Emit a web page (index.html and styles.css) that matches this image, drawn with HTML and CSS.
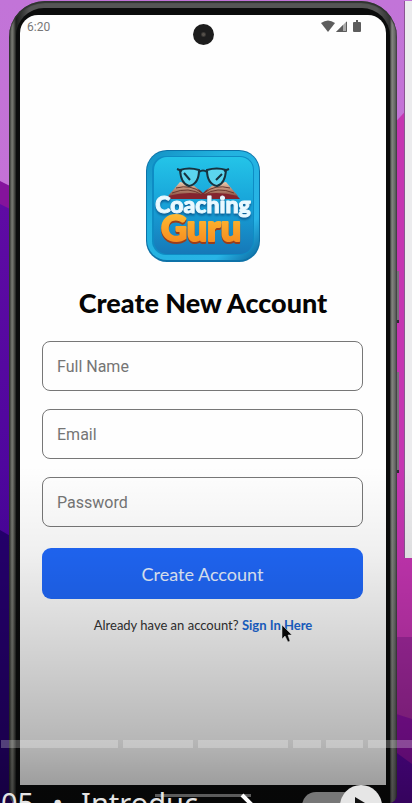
FILE: index.html
```html
<!DOCTYPE html>
<html lang="en">
<head>
<meta charset="utf-8">
<meta name="viewport" content="width=device-width, initial-scale=1">
<title>Create New Account</title>
<link rel="stylesheet" href="styles.css">
</head>
<body>
<svg class="wallpaper" viewBox="0 0 412 803" preserveAspectRatio="none" aria-hidden="true">
  <defs>
    <linearGradient id="violet" x1="0" y1="0" x2="0" y2="1"><stop offset="0" stop-color="#5f0ba4"/><stop offset="1" stop-color="#3a0096"/></linearGradient>
    <linearGradient id="orchid" x1="0" y1="0" x2="0" y2="1"><stop offset="0" stop-color="#c274d8"/><stop offset="1" stop-color="#cb69d0"/></linearGradient>
  </defs>
  <rect width="412" height="803" fill="url(#orchid)"/>
  <path d="M0 181L12 187V220H0Z" fill="#85139c"/>
  <path d="M0 204L12 210V803H0Z" fill="url(#violet)"/>
  <path d="M0 530L12 537V803H0Z" fill="#25006e"/>
  <path d="M390 128L412 104V803H390Z" fill="#c535b2"/>
  <path d="M390 637H412V803H390Z" fill="#a428a0"/>
  <path d="M390 712L412 719V803H390Z" fill="#8a10a4"/>
  <path d="M390 748L412 764V803H390Z" fill="#5b05a0"/>
</svg>
<div class="side-window"></div>

<div class="phone">
  <span class="side-key side-key-power"></span>
  <span class="side-key side-key-volume"></span>
  <div class="bezel">
    <main class="screen">
      <header class="status">
        <time>6:20</time>
        <span class="camera"></span>
        <svg width="42" height="13" viewBox="0 0 42 13" fill="#5d5d5d" aria-hidden="true">
          <path d="M0 3Q7-2 14 3L7 12Z"/>
          <path d="M26 1V12H15Z" fill="#aaa"/><path d="M22 5V12H15Z"/><path d="M25.500 2V11.500H16" fill="none" stroke="#5d5d5d"/>
          <path d="M33 2H35V0H37V2H39Q40 2 40 3V11Q40 12 39 12H33Q32 12 32 11V3Q32 2 33 2Z"/>
        </svg>
      </header>

      <svg class="logo" width="114" height="112" viewBox="0 0 114 112" role="img" aria-label="Coaching Guru">
        <defs>
          <linearGradient id="rim" x1="0" y1="0" x2="1" y2="1"><stop offset="0" stop-color="#1391c4"/><stop offset=".35" stop-color="#22b2df"/><stop offset=".8" stop-color="#28b4e6"/><stop offset="1" stop-color="#0b669e"/></linearGradient>
          <linearGradient id="face" x1="0" y1="0" x2="0" y2="1"><stop offset="0" stop-color="#24c4e8"/><stop offset=".5" stop-color="#17a2d8"/><stop offset="1" stop-color="#1678b8"/></linearGradient>
          <linearGradient id="gold" x1="0" y1="0" x2="0" y2="1"><stop offset="0" stop-color="#ffc838"/><stop offset="1" stop-color="#f5831c"/></linearGradient>
          <linearGradient id="page" x1="0" y1="0" x2="0" y2="1"><stop offset="0" stop-color="#edc9ac"/><stop offset="1" stop-color="#8d5142"/></linearGradient>
        </defs>
        <rect width="114" height="112" rx="21" fill="#0d72a8"/>
        <rect x="1" y="1" width="112" height="109" rx="20" fill="url(#rim)"/>
        <rect x="6" y="6" width="102" height="99" rx="14" fill="#0e8cc4"/>
        <rect x="8" y="7" width="99" height="97" rx="13" fill="url(#face)"/>
        <path d="M20 49L33 35Q49 34 57 43Q65 34 81 35L94 49Z" fill="#84242e"/>
        <path d="M22 46L34 32Q49 33 56 44Q40 41 22 46Z" fill="url(#page)"/>
        <path d="M92 46L80 32Q65 33 58 44Q74 41 92 46Z" fill="url(#page)"/>
        <path d="M26 43Q43 36 56 45M30 38Q45 34 56 43M88 43Q71 36 58 45M84 38Q69 34 58 43" fill="none" stroke="#69372e"/>
        <path d="M34 20Q43 17 53 20Q53 34 43 36Q35 34 34 20ZM61 20Q71 17 80 20Q79 34 71 36Q61 34 61 20Z" fill="#6bdcf1" fill-opacity=".8" stroke="#17323f" stroke-width="2"/>
        <path d="M53 22Q57 19 61 22M31 19L36 21M83 19L78 21M38 23L44 30M76 24L70 30" fill="none" stroke="#17323f" stroke-width="2"/>
        <g class="wordmark" text-anchor="middle">
          <text class="wordmark-top" x="57" y="63">Coaching</text>
          <text class="wordmark-bottom" x="55" y="91" fill="url(#gold)" stroke="url(#gold)">Guru</text>
        </g>
      </svg>

      <h1>Create New Account</h1>
      <form class="signup">
        <input type="text" placeholder="Full Name" aria-label="Full Name">
        <input type="email" placeholder="Email" aria-label="Email">
        <input type="password" placeholder="Password" aria-label="Password">
        <button type="button">Create Account</button>
      </form>
      <p class="signin">Already have an account? <a href="#">Sign In Here</a></p>
    </main>
    <div class="home-bar"></div>
  </div>
</div>

<div class="player">
  <svg class="pointer" width="11" height="19" viewBox="0 0 11 19" aria-hidden="true"><path d="M1 1V15L4 12L7 18L9 17L7 11H11Z" fill="#080808" stroke="#ddd" stroke-width=".5"/></svg>
  <div class="chapters"><i></i><i></i><i></i><i></i><i></i><i></i></div>
  <div class="controls">
    <div class="chapter-title"><span>05</span><span>•</span><span>Introduc</span></div>
    <svg class="chevron" width="16" height="26" viewBox="0 0 16 26" aria-hidden="true"><path d="M2 2L13 13L2 24" fill="none" stroke="#fff" stroke-width="4"/></svg>
    <button class="autoplay" type="button" aria-label="Autoplay"><svg width="42" height="42" viewBox="0 0 42 42" aria-hidden="true"><circle cx="21" cy="21" r="21" fill="#e6e6e6"/><path d="M15 12L30 21L15 30Z" fill="#111"/></svg></button>
  </div>
</div>
</body>
</html>
```
FILE: styles.css
```css
* { box-sizing: border-box; }

body {
  margin: 0;
  height: 100vh;
  position: relative;
  overflow: hidden;
  display: flex;
  font-family: Lato, "Open Sans", sans-serif;
}

.wallpaper {
  position: absolute;
  inset: 0;
  width: 100%;
  height: 100%;
}

.side-window {
  position: absolute;
  top: 1px;
  right: 0;
  width: 8px;
  height: 557px;
  background: #ececee;
  border-left: 1px solid #8a5592;
}

.phone {
  position: relative;
  flex: 1;
  display: flex;
  margin: 1px 15px 0 9px;
  padding: 7px 7px 0;
  border-radius: 36px 36px 8px 8px;
  background: linear-gradient(90deg, #252825, #777972 3px, #6b6c66 4px, #1c1e1c 7px, #555 20px, #555 calc(100% - 20px), #333 calc(100% - 7px), #858781 calc(100% - 5px), #666 calc(100% - 2px), #3c3c3e);
  box-shadow: inset 0 2px 1px #303331;
}

.side-key {
  position: absolute;
  left: 100%;
  width: 2px;
  background: #77717a;
  border-bottom: 3px solid #302a35;
}
.side-key-power { top: 270px; height: 52px; }
.side-key-volume { top: 371px; height: 101px; }

.bezel {
  flex: 1;
  display: flex;
  flex-direction: column;
  padding: 7px 4px 0;
  border-radius: 28px 28px 0 0;
  background: #0b0c0c;
}

.screen {
  flex: 1;
  display: flex;
  flex-direction: column;
  align-items: center;
  border-radius: 18px 18px 0 0;
  background: #fefefe;
}

.status {
  align-self: stretch;
  display: grid;
  grid-template-columns: 1fr auto 1fr;
  align-items: start;
  padding: 5px 23px 0 7px;
  height: 36px;
}
.status time {
  font: 12px/14px Roboto, sans-serif;
  color: #777;
}
.status svg { justify-self: end; }
.camera {
  width: 21px;
  height: 21px;
  margin: 4px 0 0 16px;
  border-radius: 50%;
  background: radial-gradient(circle, #55504a 0 1px, #1d1d1d 3px);
}

.logo { margin-top: 99px; }
.wordmark {
  font-family: Lato, sans-serif;
  font-weight: 900;
  stroke-linejoin: round;
}
.wordmark-top {
  font-size: 23px;
  fill: #e9f9ff;
  stroke: #e9f9ff;
  stroke-width: 1px;
  filter: drop-shadow(0 2px 1px #0b5c93);
}
.wordmark-bottom {
  font-size: 36px;
  stroke-width: 2px;
  filter: drop-shadow(0 2px 0 #983d1c);
}

h1 {
  margin: 24px 0 21px;
  font-size: 27px;
  line-height: 34px;
  font-weight: 900;
  color: #050505;
}

.signup {
  align-self: stretch;
  display: flex;
  flex-direction: column;
  gap: 18px;
  padding: 0 23px 0 22px;
}
.signup input {
  height: 50px;
  padding: 0 14px;
  border: 1px solid #777;
  border-radius: 8px;
  background: transparent;
  font: 16px Roboto, sans-serif;
}
.signup input::placeholder { color: #757575; opacity: 1; }
.signup button {
  height: 51px;
  margin-top: 3px;
  border: 0;
  border-radius: 9px;
  background: #2068fa;
  color: #e6f0ff;
  font: 18px Lato, sans-serif;
}

.signin {
  margin: 18px 0 0;
  font-size: 13px;
  line-height: 16px;
  color: #333;
}
.signin a {
  color: #1b69d8;
  font-weight: 700;
  text-decoration: none;
}

.home-bar {
  height: 18px;
  padding-top: 9px;
}
.home-bar::before {
  content: "";
  display: block;
  width: 96px;
  height: 3px;
  margin: 0 auto;
  background: #999;
}

.player {
  position: absolute;
  inset: 0;
  overflow: hidden;
  display: flex;
  flex-direction: column;
  justify-content: flex-end;
  background: linear-gradient(transparent 58%, rgba(0, 0, 0, .06) 69%, rgba(0, 0, 0, .18) 82%, rgba(0, 0, 0, .28) 92%, rgba(0, 0, 0, .42));
}
.pointer {
  position: absolute;
  left: 281px;
  top: 624px;
}
.chapters {
  display: grid;
  grid-template-columns: 117fr 70fr 90fr 28fr 37fr 44fr;
  gap: 5px;
  height: 8px;
  margin: 0 0 37px 1px;
}
.chapters i { background: rgba(255, 255, 255, .25); }
.controls {
  display: flex;
  align-items: flex-start;
  height: 18px;
}
.chapter-title {
  display: flex;
  gap: 18px;
  flex: 0 0 240px;
  padding-left: 1px;
  font: 29px/36px "Noto Sans", sans-serif;
  color: #e4e4e4;
}
.chevron { flex: none; margin-top: 8px; }
.autoplay {
  flex: none;
  display: flex;
  justify-content: flex-end;
  width: 80px;
  height: 28px;
  margin: 7px 0 0 46px;
  padding: 0;
  border: 0;
  border-radius: 14px;
  background: #777;
}
.autoplay svg { flex: none; margin-top: -7px; }
```
